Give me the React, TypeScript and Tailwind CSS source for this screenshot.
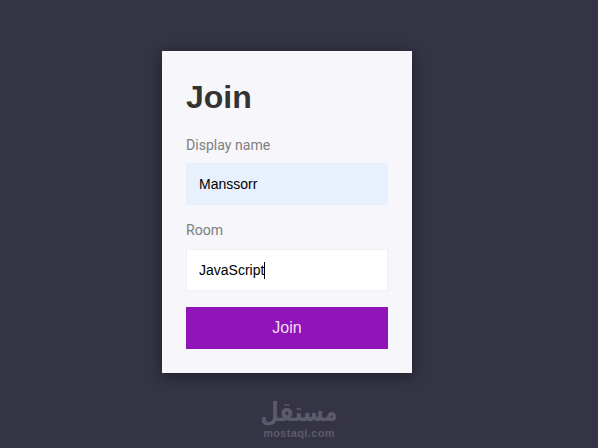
export default function App() {
  const sans = "font-['Liberation_Sans',Arial,sans-serif]";
  return (
    <div className={`relative h-[448px] w-[598px] overflow-hidden bg-[#353445] pt-[51px] pr-6 flex flex-col items-center ${sans}`}>
      <form className="w-[250px] h-[322px] bg-[#f6f6fb] p-6 shadow-[0_3px_14px_rgba(0,0,0,0.45)] flex flex-col">
        <h1 className="text-[32px] leading-[44px] font-bold text-[#333333]">Join</h1>
        <label className="mt-4 text-[14.1px] leading-[20px] text-[#808080] font-['Roboto',sans-serif]">Display name</label>
        <input
          readOnly
          value="Manssorr"
          className={`mt-2 h-[42px] w-full bg-[#e8effd] px-[13px] text-[14px] text-black outline-none ${sans}`}
        />
        <label className="mt-[15px] text-[14.1px] leading-[20px] text-[#808080] font-['Roboto',sans-serif]">Room</label>
        <div className="relative mt-[9px]">
          <input
            readOnly
            value="JavaScript"
            className={`h-[42px] w-full bg-white border border-[#f0f0f6] px-[12px] text-[14px] text-black outline-none ${sans}`}
          />
          <span className="absolute left-[78px] top-[13px] h-[17px] w-px bg-black" />
        </div>
        <button type="button" className="mt-4 h-[42px] w-full bg-[#8f15b9] text-[16px] text-[#f6dcf6]">Join</button>
      </form>
      <div className="absolute left-[263px] top-[403px] w-[72px] flex flex-col items-center text-[#5c5b6b] font-bold">
        <span dir="rtl" className="text-[21px] leading-[24px] font-['DejaVu_Sans',sans-serif] scale-y-[1.25] origin-bottom">مستقل</span>
        <span className="text-[11px] leading-[12px] tracking-[0.35px] whitespace-nowrap">mostaql.com</span>
      </div>
    </div>
  );
}
